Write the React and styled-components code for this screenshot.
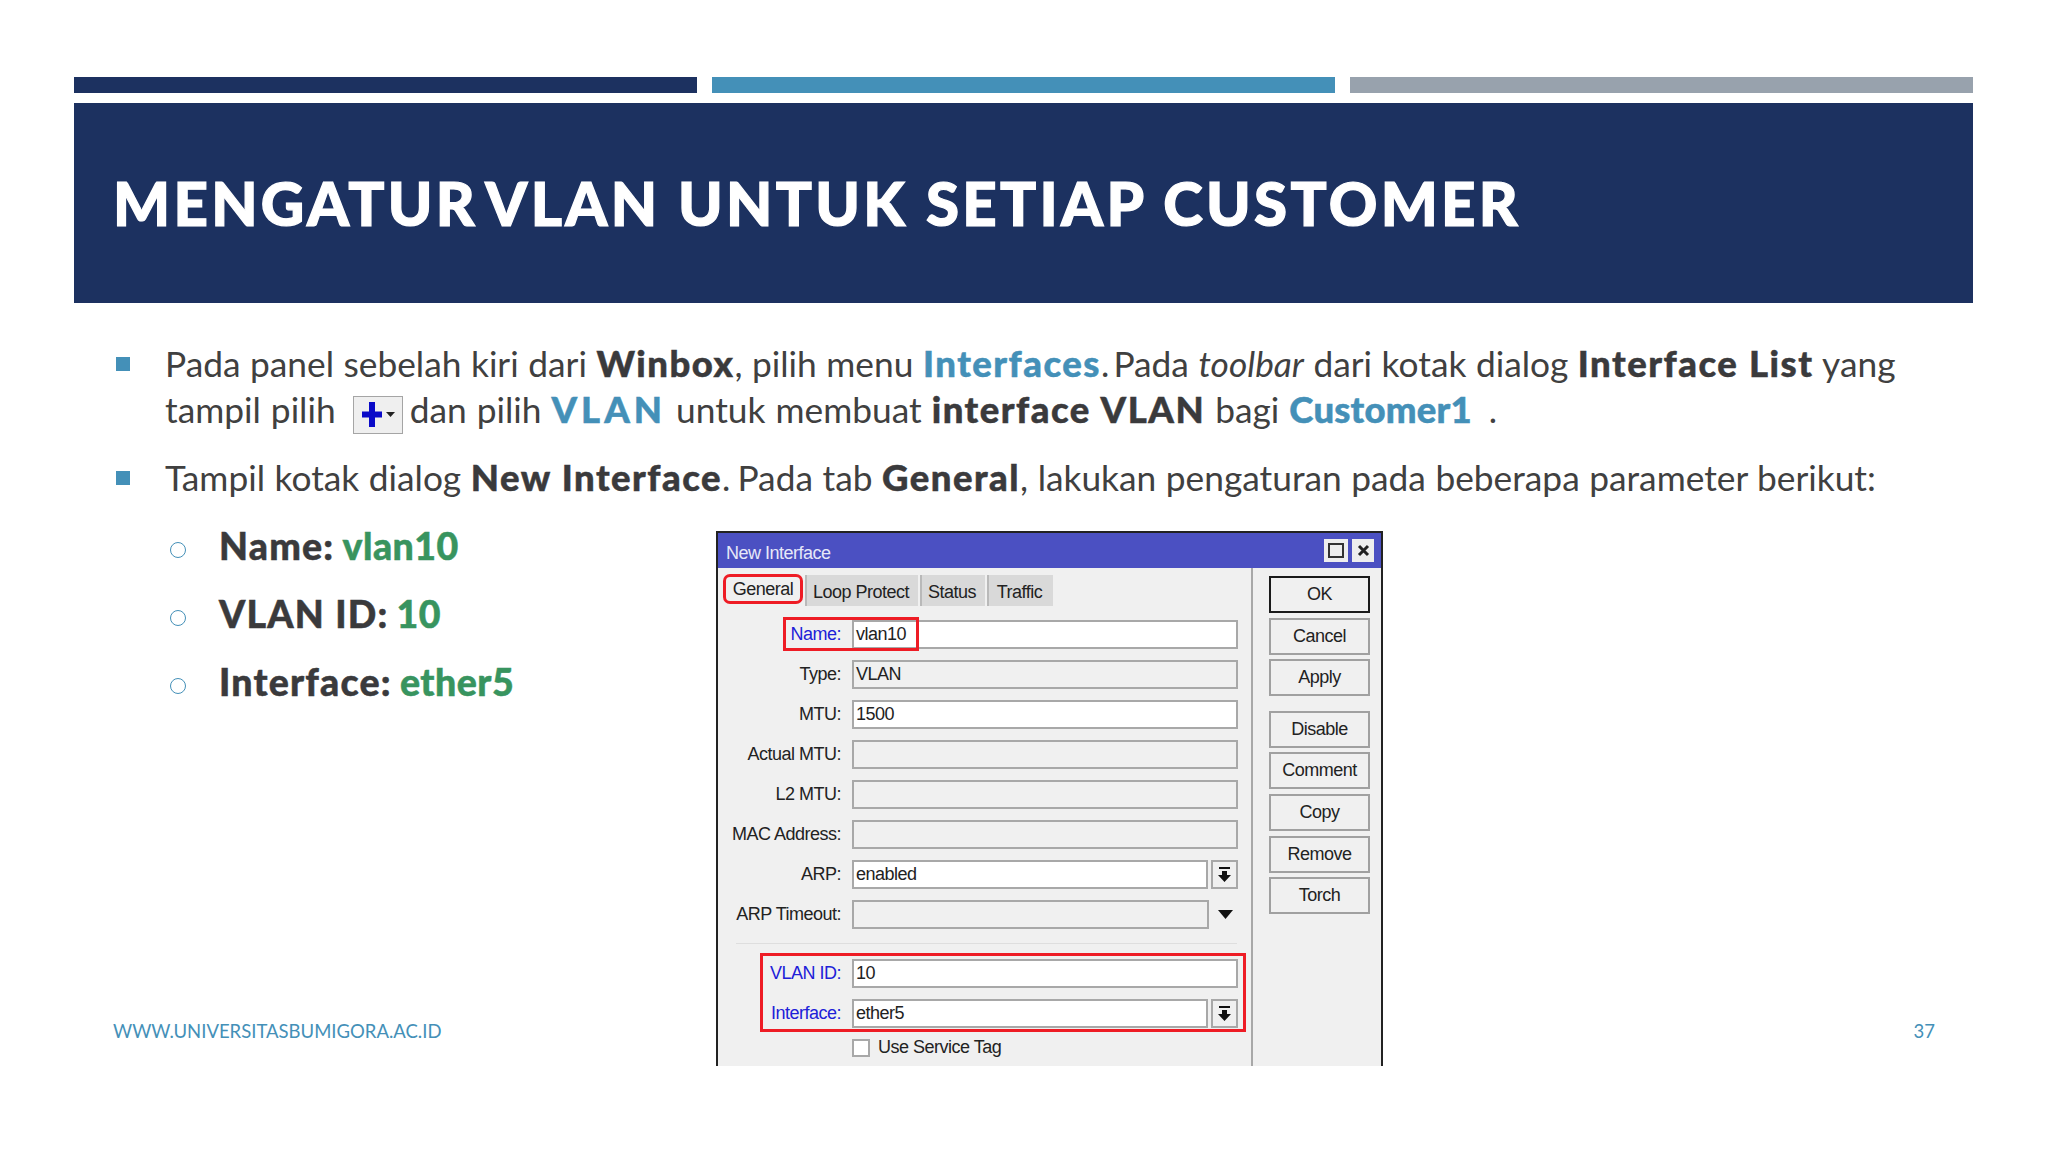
import styled, { createGlobalStyle } from "styled-components";

const GlobalStyle = createGlobalStyle`
  html, body {
    margin: 0;
    padding: 0;
    background: #fff;
  }
`;

const Slide = styled.div`
  width: 2048px;
  height: 1152px;
  padding: 77px 75px 0 74px;
  box-sizing: border-box;
  overflow: hidden;
  background: #fff;
  font-family: Lato, "Liberation Sans", sans-serif;
  color: #404040;
`;

const Stripes = styled.div`
  display: flex;
  gap: 15.500px;
  height: 16px;
`;

const Stripe = styled.div`
  flex: 1;
  background: ${(p) => p.$color};
`;

const Banner = styled.header`
  margin-top: 10px;
  height: 200px;
  padding: 0 0 0 39px;
  display: flex;
  align-items: center;
  background: #1c3160;
`;

const Title = styled.h1`
  margin: 0;
  color: #fff;
  font-size: 60px;
  font-weight: 900;
  letter-spacing: 3.300px;
  -webkit-text-stroke: 1.200px #fff;
  white-space: nowrap;
`;

const TightWord = styled.span`
  margin-right: -8px;
`;

const Bullets = styled.div`
  margin-top: 37px;
  padding-left: 42px;
`;

const Bullet = styled.div`
  position: relative;
  padding-left: 49px;
  margin-bottom: ${(p) => p.$after}px;

  &::before {
    content: "";
    position: absolute;
    left: 0;
    top: 17px;
    width: 14px;
    height: 14px;
    background: #4490b8;
  }
`;

const Line = styled.div`
  height: 46px;
  line-height: 46px;
  font-size: 35.300px;
  white-space: nowrap;
  word-spacing: ${(p) => p.$words || 0}px;
`;

const Strong = styled.b`
  font-weight: 900;
  font-size: 36.500px;
  letter-spacing: ${(p) => (p.$spacing === undefined ? 1.5 : p.$spacing)}px;
  -webkit-text-stroke: 0.500px #3a3a3c;
  color: #3a3a3c;
`;

const Accent = styled.b`
  font-weight: 900;
  font-size: 36.500px;
  letter-spacing: ${(p) => (p.$spacing === undefined ? 1.5 : p.$spacing)}px;
  -webkit-text-stroke: 0.500px #4490b8;
  color: #4490b8;
`;

const TightStop = styled.span`
  word-spacing: ${(p) => p.$space}px;
`;

const PlusButton = styled.span`
  display: inline-flex;
  align-items: center;
  justify-content: center;
  width: 50px;
  height: 38px;
  margin: 0 7px 0 7px;
  padding-left: 1px;
  vertical-align: -4px;
  background: #efefef;
  border: 1px solid #a5a5a5;
  box-sizing: border-box;
`;

const Lower = styled.div`
  display: flex;
  margin-top: 31px;
  height: 535px;
`;

const LeftColumn = styled.div`
  width: 642px;
  padding-left: 39px;
  box-sizing: border-box;
  display: flex;
  flex-direction: column;
`;

const SubList = styled.div`
  margin-top: -19px;
  padding-left: 106px;
`;

const SubItem = styled.div`
  position: relative;
  height: 68px;
  line-height: 68px;
  font-size: 37.500px;
  font-weight: 900;
  letter-spacing: 1.200px;
  -webkit-text-stroke: 0.500px #3a3a3c;
  color: #3a3a3c;
  white-space: nowrap;

  &::before {
    content: "";
    position: absolute;
    left: -49px;
    top: 30px;
    width: 16px;
    height: 16px;
    border: 1.5px solid #4490b8;
    border-radius: 50%;
    box-sizing: border-box;
  }
`;

const Green = styled.span`
  letter-spacing: 0.500px;
  margin-left: -2px;
  -webkit-text-stroke: 0.500px #38945f;
  color: #38945f;
`;

const FooterLink = styled.div`
  margin-top: auto;
  margin-bottom: 24px;
  font-size: 18.500px;
  color: #4490b8;
  white-space: nowrap;
`;

const Dialog = styled.div`
  width: 667px;
  height: 535px;
  box-sizing: border-box;
  border: 2px solid #222;
  border-bottom: 0;
  background: #f0f0f0;
  display: flex;
  flex-direction: column;
  font-family: "Liberation Sans", Arial, sans-serif;
  font-size: 18px;
  letter-spacing: -0.5px;
  color: #222;
`;

const TitleBar = styled.div`
  height: 35px;
  flex: none;
  display: flex;
  align-items: center;
  justify-content: space-between;
  padding: 5px 7px 0 8px;
  box-sizing: border-box;
  background: #4b50c2;
  color: #e6e8f8;
`;

const WindowButtons = styled.div`
  display: flex;
  gap: 4px;
  margin-top: -5px;
`;

const WindowButton = styled.div`
  width: ${(p) => p.$w}px;
  height: 23px;
  display: flex;
  align-items: center;
  justify-content: center;
  background: #eee;
`;

const DialogBody = styled.div`
  flex: 1;
  display: flex;
  min-height: 0;
`;

const FormPane = styled.div`
  width: 535px;
  flex: none;
  box-sizing: border-box;
  border-right: 2px solid #a8a8a8;
`;

const TabRow = styled.div`
  display: flex;
  height: 38px;
  align-items: flex-end;
  padding-left: 5px;
`;

const ActiveTab = styled.div`
  width: 80px;
  height: 30px;
  margin-bottom: 2px;
  box-sizing: border-box;
  display: flex;
  align-items: center;
  justify-content: center;
  border: 3px solid #ee1c25;
  border-radius: 7px;
`;

const Tab = styled.div`
  width: ${(p) => p.$w}px;
  height: 31px;
  margin-left: 2px;
  padding: 3px 3px 0 0;
  display: flex;
  align-items: center;
  justify-content: center;
  background: #d9d9d9;
  border-left: 2px solid #b9b9b9;
  box-sizing: border-box;
`;

const Fields = styled.div`
  padding-top: 14px;
`;

const Row = styled.div`
  position: relative;
  display: grid;
  grid-template-columns: 123px 386px;
  column-gap: 11px;
  height: 28px;
  margin-bottom: ${(p) => (p.$after === undefined ? 12 : p.$after)}px;
`;

const Label = styled.div`
  text-align: right;
  line-height: 29px;
  white-space: nowrap;
  color: ${(p) => (p.$blue ? "#2020d8" : "#222")};
`;

const Control = styled.div`
  display: flex;
  gap: 3px;
  min-width: 0;
`;

const Input = styled.div`
  flex: 1;
  box-sizing: border-box;
  padding-left: 2px;
  line-height: 25px;
  border: 2px solid #a8a8a8;
  background: ${(p) => (p.$readonly ? "#f0f0f0" : "#fff")};
`;

const DropButton = styled.div`
  width: 27px;
  box-sizing: border-box;
  display: flex;
  align-items: center;
  justify-content: center;
  border: 2px solid #a8a8a8;
`;

const ArrowSlot = styled.div`
  width: 26px;
  display: flex;
  align-items: center;
  justify-content: center;
`;

const NameHighlight = styled.div`
  position: absolute;
  left: 65px;
  top: -3px;
  width: 136px;
  height: 34px;
  box-sizing: border-box;
  border: 3px solid #ee1c25;
  pointer-events: none;
`;

const Divider = styled.div`
  height: 1px;
  margin: 0 14px 9px 18px;
  background: #dedede;
`;

const RedGroup = styled.div`
  margin: 0 5px 0 42px;
  padding: 3px 0 3px;
  height: 79px;
  box-sizing: border-box;
  border: 3px solid #ee1c25;

  ${Row} {
    margin-left: -45px;
  }
`;

const CheckRow = styled.div`
  display: flex;
  align-items: center;
  gap: 8px;
  margin: 5px 0 0 134px;
`;

const CheckBox = styled.div`
  width: 18px;
  height: 18px;
  box-sizing: border-box;
  border: 2px solid #a8a8a8;
  background: #fff;
`;

const ButtonColumn = styled.div`
  padding: 8px 0 0 16px;
  display: flex;
  flex-direction: column;
  gap: 4.600px;
`;

const DialogButton = styled.div`
  width: 101px;
  height: 37px;
  box-sizing: border-box;
  display: flex;
  align-items: center;
  justify-content: center;
  border: 2px solid ${(p) => (p.$primary ? "#1a1a1a" : "#a0a0a0")};
  margin-bottom: ${(p) => p.$after || 0}px;
`;

const RightColumn = styled.div`
  flex: 1;
  display: flex;
  justify-content: flex-end;
  align-items: flex-end;
  padding: 0 38px 24px 0;
`;

const PageNumber = styled.div`
  font-size: 18.500px;
  color: #4490b8;
`;

const DropIcon = () => (
  <svg width="13" height="15" viewBox="0 0 13 15">
    <rect x="1" y="0" width="11" height="2" fill="#111" />
    <path d="M4 4h5v4h4l-6.500 7L0 8h4z" fill="#111" />
  </svg>
);

const ArrowIcon = () => (
  <svg width="15" height="9" viewBox="0 0 15 9">
    <path d="M0 0h15L7.500 9z" fill="#111" />
  </svg>
);

const formRows = [
  { label: "Name:", value: "vlan10", blue: true, highlight: true },
  { label: "Type:", value: "VLAN", readonly: true },
  { label: "MTU:", value: "1500" },
  { label: "Actual MTU:", readonly: true },
  { label: "L2 MTU:", readonly: true },
  { label: "MAC Address:", readonly: true },
];

const buttons = [
  { text: "OK", primary: true },
  { text: "Cancel" },
  { text: "Apply", after: 10 },
  { text: "Disable" },
  { text: "Comment" },
  { text: "Copy" },
  { text: "Remove" },
  { text: "Torch" },
];

export default function App() {
  return (
    <>
      <GlobalStyle />
      <Slide>
        <Stripes>
          <Stripe $color="#1c3160" />
          <Stripe $color="#4490b8" />
          <Stripe $color="#98a2ad" />
        </Stripes>
        <Banner>
          <Title>
            <TightWord>MENGATUR</TightWord> VLAN UNTUK SETIAP CUSTOMER
          </Title>
        </Banner>

        <Bullets>
          <Bullet $after={22}>
            <Line $words={0.5}>
              Pada panel sebelah kiri dari <Strong>Winbox</Strong>, pilih menu{" "}
              <Accent>Interfaces</Accent>
              <TightStop $space={-5}>. </TightStop>Pada <i>toolbar</i> dari kotak dialog{" "}
              <Strong>Interface List</Strong> yang
            </Line>
            <Line $words={1}>
              tampil pilih{" "}
              <PlusButton>
                <svg width="33" height="25" viewBox="0 0 33 25">
                  <path d="M7 0h6v9.500h7v6h-7V25H7v-9.500H0v-6h7z" fill="#0a0ac8" />
                  <path d="M24 10h9l-4.500 5z" fill="#222" />
                </svg>
              </PlusButton>
              dan pilih <Accent $spacing={4}>VLAN</Accent> untuk membuat{" "}
              <Strong>interface VLAN</Strong> bagi <Accent $spacing={0.2}>Customer1</Accent>
              <TightStop $space={8}> .</TightStop>
            </Line>
          </Bullet>
          <Bullet $after={0}>
            <Line $words={0.5}>
              Tampil kotak dialog <Strong>New Interface</Strong>
              <TightStop $space={-2}>. </TightStop>Pada tab <Strong>General</Strong>, lakukan
              pengaturan pada beberapa parameter berikut:
            </Line>
          </Bullet>
        </Bullets>

        <Lower>
          <LeftColumn>
            <SubList>
              <SubItem>
                Name: <Green>vlan10</Green>
              </SubItem>
              <SubItem>
                VLAN ID: <Green>10</Green>
              </SubItem>
              <SubItem>
                Interface: <Green>ether5</Green>
              </SubItem>
            </SubList>
            <FooterLink>WWW.UNIVERSITASBUMIGORA.AC.ID</FooterLink>
          </LeftColumn>

          <Dialog>
            <TitleBar>
              New Interface
              <WindowButtons>
                <WindowButton $w={24}>
                  <svg width="16" height="15" viewBox="0 0 16 15">
                    <rect x="1" y="1" width="14" height="13" fill="none" stroke="#333" strokeWidth="2" />
                  </svg>
                </WindowButton>
                <WindowButton $w={22}>
                  <svg width="13" height="13" viewBox="0 0 13 13">
                    <path d="M2 2l9 9M11 2l-9 9" stroke="#222" strokeWidth="3" />
                  </svg>
                </WindowButton>
              </WindowButtons>
            </TitleBar>
            <DialogBody>
              <FormPane>
                <TabRow>
                  <ActiveTab>General</ActiveTab>
                  <Tab $w={113}>Loop Protect</Tab>
                  <Tab $w={65}>Status</Tab>
                  <Tab $w={66}>Traffic</Tab>
                </TabRow>
                <Fields>
                  {formRows.map((row) => (
                    <Row key={row.label}>
                      <Label $blue={row.blue}>{row.label}</Label>
                      <Control>
                        <Input $readonly={row.readonly}>{row.value}</Input>
                      </Control>
                      {row.highlight && <NameHighlight />}
                    </Row>
                  ))}
                  <Row>
                    <Label>ARP:</Label>
                    <Control>
                      <Input>enabled</Input>
                      <DropButton>
                        <DropIcon />
                      </DropButton>
                    </Control>
                  </Row>
                  <Row $after={15}>
                    <Label>ARP Timeout:</Label>
                    <Control>
                      <Input $readonly />
                      <ArrowSlot>
                        <ArrowIcon />
                      </ArrowSlot>
                    </Control>
                  </Row>
                  <Divider />
                  <RedGroup>
                    <Row $after={12}>
                      <Label $blue>VLAN ID:</Label>
                      <Control>
                        <Input>10</Input>
                      </Control>
                    </Row>
                    <Row $after={0}>
                      <Label $blue>Interface:</Label>
                      <Control>
                        <Input>ether5</Input>
                        <DropButton>
                          <DropIcon />
                        </DropButton>
                      </Control>
                    </Row>
                  </RedGroup>
                  <CheckRow>
                    <CheckBox />
                    Use Service Tag
                  </CheckRow>
                </Fields>
              </FormPane>
              <ButtonColumn>
                {buttons.map((b) => (
                  <DialogButton key={b.text} $primary={b.primary} $after={b.after}>
                    {b.text}
                  </DialogButton>
                ))}
              </ButtonColumn>
            </DialogBody>
          </Dialog>

          <RightColumn>
            <PageNumber>37</PageNumber>
          </RightColumn>
        </Lower>
      </Slide>
    </>
  );
}
